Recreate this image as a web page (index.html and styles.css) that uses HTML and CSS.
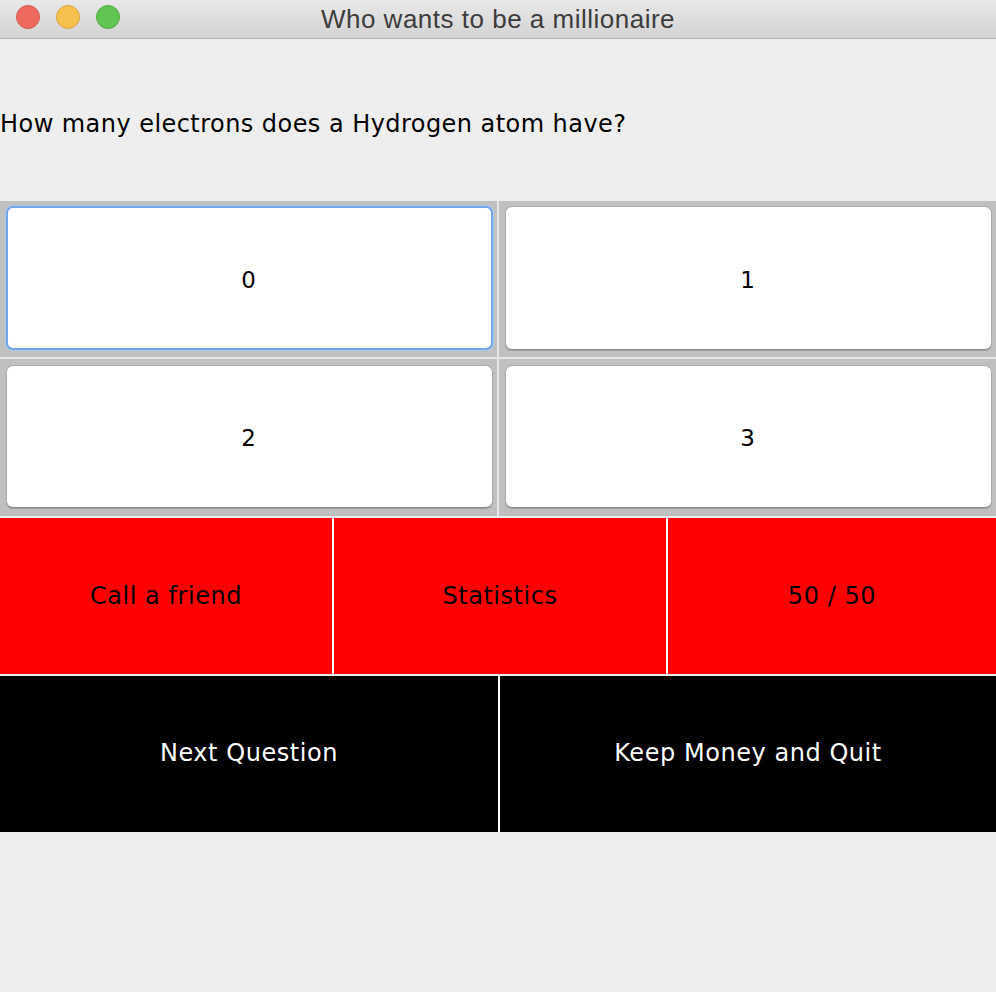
FILE: index.html
```html
<!DOCTYPE html>
<html>
<head>
<meta charset="utf-8">
<title>Who wants to be a millionaire</title>
<link rel="stylesheet" href="styles.css">
</head>
<body>
<div class="window">
  <div class="titlebar">
    <div class="lights">
      <span class="light red"></span>
      <span class="light yellow"></span>
      <span class="light green"></span>
    </div>
    <div class="title">Who wants to be a millionaire</div>
  </div>
  <div class="question">How many electrons does a Hydrogen atom have?</div>
  <div class="answers">
    <div class="cell row1"><button class="answer focused">0</button></div>
    <div class="cell row1"><button class="answer">1</button></div>
    <div class="cell row2"><button class="answer">2</button></div>
    <div class="cell row2"><button class="answer">3</button></div>
  </div>
  <div class="lifelines">
    <div class="lifeline">Call a friend</div>
    <div class="lifeline">Statistics</div>
    <div class="lifeline">50 / 50</div>
  </div>
  <div class="nav">
    <div class="navbtn">Next Question</div>
    <div class="navbtn">Keep Money and Quit</div>
  </div>
</div>
</body>
</html>
```

FILE: styles.css
```css
html, body {
  margin: 0;
  padding: 0;
  background: #eeeeee;
}
.window {
  width: 996px;
  height: 992px;
  background: #eeeeee;
  display: flex;
  flex-direction: column;
  font-family: "DejaVu Sans", "Open Sans", sans-serif;
  overflow: hidden;
}
.titlebar {
  height: 38px;
  border-bottom: 1px solid #b3b3b3;
  background: linear-gradient(#e9e8e9, #d4d3d4);
  display: flex;
  align-items: center;
  justify-content: center;
  position: relative;
}
.lights {
  position: absolute;
  left: 16px;
  top: 5px;
  display: flex;
  gap: 16px;
}
.light {
  width: 22px;
  height: 22px;
  border-radius: 50%;
  border: 1px solid;
}
.red { background: #ee6a5f; border-color: #d4574d; }
.yellow { background: #f6c04f; border-color: #d9a33e; }
.green { background: #61c554; border-color: #4fa83f; }
.title {
  font-family: "Liberation Sans", Arial, sans-serif;
  font-size: 26px;
  letter-spacing: 0.5px;
  color: #3c3c3c;
  margin-top: 0;
}
.question {
  height: 162px;
  display: flex;
  align-items: center;
  font-size: 24px;
  letter-spacing: 0.45px;
  color: #000;
  padding-top: 8px;
  box-sizing: border-box;
}
.answers {
  display: grid;
  grid-template-columns: 497px 497px;
  grid-template-rows: 156px 157px;
  gap: 2px;
  background: #e6e6e6;
}
.cell {
  background: #c0c0c0;
  display: flex;
  padding: 5px 4px 7px 6px;
}
.cell.row2 {
  padding: 6px 4px 8px 6px;
}
.answer {
  flex: 1;
  margin: 0;
  background: #ffffff;
  border: 1px solid #ababab;
  border-bottom-color: #8c8c8c;
  border-radius: 7px;
  box-shadow: 0 1px 1px rgba(0, 0, 0, 0.18);
  font-family: "DejaVu Sans", "Open Sans", sans-serif;
  font-size: 23px;
  color: #000;
  padding: 3px 2px 0 0;
}
.answer.focused {
  border: 2px solid #74a6e6;
  box-shadow: 0 0 0 1px #aac8f0;
}
.lifelines {
  margin-top: 2px;
  display: grid;
  grid-template-columns: 332px 332px 328px;
  gap: 2px;
  height: 156px;
  background: #ffffff;
}
.lifeline {
  background: #ff0000;
  display: flex;
  align-items: center;
  justify-content: center;
  font-size: 24px;
  letter-spacing: 0.55px;
  color: #000;
  padding-bottom: 0;
}
.nav {
  margin-top: 2px;
  display: grid;
  grid-template-columns: 498px 496px;
  gap: 2px;
  height: 156px;
  background: #ffffff;
}
.navbtn {
  background: #000;
  display: flex;
  align-items: center;
  justify-content: center;
  font-size: 24px;
  letter-spacing: 0.55px;
  color: #fff;
  padding-bottom: 2px;
}
```
